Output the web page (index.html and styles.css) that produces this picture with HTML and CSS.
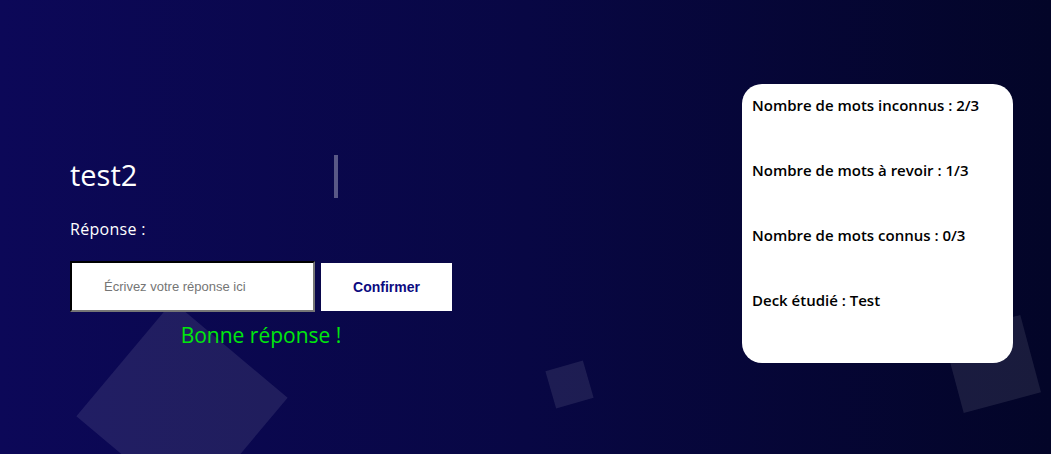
FILE: index.html
```html
<!DOCTYPE html>
<html lang="fr">
<head>
<meta charset="utf-8">
<title>Révision</title>
<link rel="stylesheet" href="styles.css">
</head>
<body>
<div class="page">
  <div class="shape shape-a"></div>
  <div class="shape shape-b"></div>
  <div class="shape shape-c"></div>
  <section class="quiz">
    <div class="word-row">
      <h1 class="word">test2</h1>
      <span class="divider"></span>
    </div>
    <p class="label">Réponse :</p>
    <form class="answer">
      <input class="answer-input" type="text" placeholder="Écrivez votre réponse ici">
      <button class="answer-btn" type="button">Confirmer</button>
    </form>
    <p class="feedback">Bonne réponse !</p>
  </section>
  <aside class="stats">
    <p class="stat">Nombre de mots inconnus : 2/3</p>
    <p class="stat">Nombre de mots à revoir : 1/3</p>
    <p class="stat">Nombre de mots connus : 0/3</p>
    <p class="stat">Deck étudié : Test</p>
  </aside>
</div>
</body>
</html>
```

FILE: styles.css
```css
* { box-sizing: border-box; }
html, body { margin: 0; padding: 0; }
body {
  width: 1051px;
  height: 454px;
  overflow: hidden;
  font-family: "Open Sans", "Noto Sans", sans-serif;
}
.page {
  position: relative;
  width: 1051px;
  height: 454px;
  overflow: hidden;
  background: linear-gradient(to right, #0c0858 0%, #080744 50%, #030528 100%);
  display: flex;
  justify-content: space-between;
  align-items: flex-start;
}
.shape {
  position: absolute;
  background: rgba(255, 255, 255, 0.09);
}
.shape-a {
  width: 150px; height: 150px;
  left: 107px; top: 332px;
  transform: rotate(40deg);
}
.shape-b {
  width: 39px; height: 39px;
  left: 550px; top: 365px;
  transform: rotate(-16deg);
}
.shape-c {
  width: 80px; height: 80px;
  left: 952px; top: 324px;
  transform: rotate(-15deg);
}
.quiz {
  position: relative;
  z-index: 1;
  padding: 155px 0 0 70px;
  width: 452px;
  display: flex;
  flex-direction: column;
  align-items: flex-start;
}
.word-row {
  width: 268px;
  height: 43px;
  display: flex;
  align-items: center;
  justify-content: space-between;
}
.word {
  margin: 0;
  font-size: 29px;
  font-weight: 400;
  color: #fff;
  line-height: 1;
  padding-bottom: 4px;
}
.divider {
  width: 4px;
  height: 43px;
  background: rgba(255, 255, 255, 0.33);
}
.label {
  margin: 20px 0 0;
  font-size: 16px;
  letter-spacing: 0.3px;
  line-height: 22px;
  color: #fff;
}
.answer {
  margin: 21px 0 0;
  display: flex;
  align-items: center;
  gap: 6px;
}
.answer-input {
  width: 245px;
  height: 51px;
  border: 2px inset #767676;
  border-top-color: #333;
  border-left-color: #333;
  background: #fff;
  padding: 0 0 0 32px;
  font-family: "Liberation Sans", Arial, sans-serif;
  font-size: 13px;
  color: #222;
  outline: none;
}
.answer-input::placeholder { color: #757575; }
.answer-btn {
  width: 131px;
  height: 48px;
  border: none;
  background: #fff;
  font-family: "Liberation Sans", Arial, sans-serif;
  font-weight: 700;
  font-size: 14px;
  color: #0c0a80;
  cursor: pointer;
}
.feedback {
  align-self: stretch;
  text-align: center;
  margin: 9px 0 0;
  font-size: 21px;
  line-height: 28px;
  color: #00e80c;
}
.stats {
  position: relative;
  z-index: 1;
  margin: 84px 38px 0 0;
  width: 271px;
  height: 279px;
  background: #fff;
  border-radius: 20px;
  padding: 10px 10px;
  display: flex;
  flex-direction: column;
  gap: 43px;
}
.stat {
  margin: 0;
  font-size: 15px;
  line-height: 22px;
  font-weight: 600;
  color: #000;
  white-space: nowrap;
}
```
